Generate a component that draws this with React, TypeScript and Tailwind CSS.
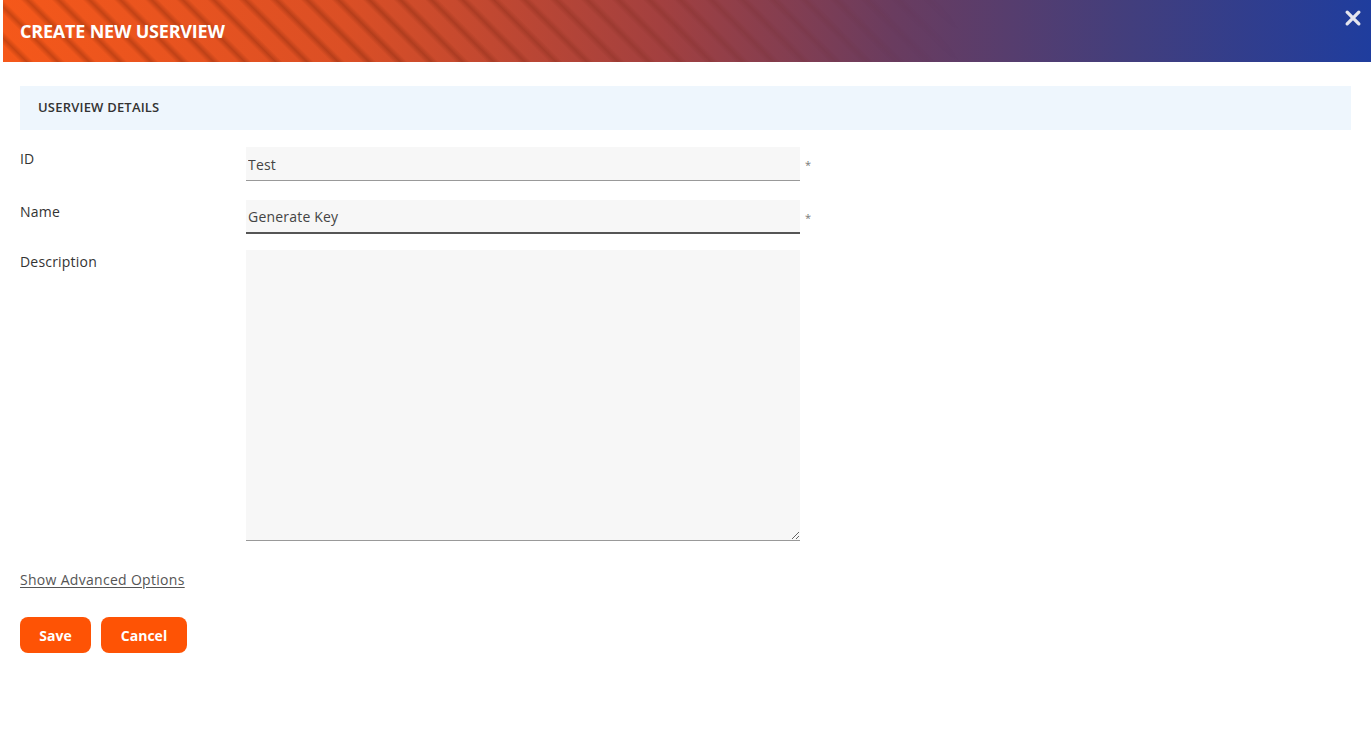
import { useState } from 'react';

const FONT = "font-['Open_Sans','Liberation_Sans',sans-serif]";

export default function App() {
  const [id, setId] = useState('Test');
  const [name, setName] = useState('Generate Key');
  const [description, setDescription] = useState('');

  return (
    <div className={`${FONT} bg-white min-h-[732px] w-full text-[#333]`}>
      {/* Header */}
      <div className="relative ml-[3px] h-[62px] overflow-hidden bg-[linear-gradient(90deg,#f5581a_0%,#db4f25_25%,#a3403f_48%,#6a3c5f_65%,#433e7c_82%,#1f3d9e_100%)]">
        <div className="absolute inset-y-0 left-0 w-[70%] bg-[repeating-linear-gradient(45deg,rgba(0,0,0,0)_0px,rgba(0,0,0,0)_12px,rgba(90,20,0,0.28)_17px,rgba(0,0,0,0)_22px)] [mask-image:linear-gradient(to_right,black_0%,black_40%,transparent_100%)]" />
        <div className="relative flex h-full items-center justify-between pl-[17px] pr-[8px]">
          <h1 className="text-[18px] font-bold tracking-[-0.2px] text-white">
            CREATE NEW USERVIEW
          </h1>
          <button className="self-start mt-[8px] text-[#e5e5ee]">
            <svg viewBox="0 0 24 24" className="h-[20px] w-[20px]" fill="none" stroke="currentColor" strokeWidth={4} strokeLinecap="round">
              <path d="M5 5l14 14M19 5L5 19" />
            </svg>
          </button>
        </div>
      </div>

      <div className="px-5">
        {/* Section header */}
        <div className="mt-6 flex h-[44px] items-center bg-[#eef6fd] px-[18px]">
          <h2 className="text-[13px] font-semibold tracking-[0.2px] text-[#333]">USERVIEW DETAILS</h2>
        </div>

        {/* Form */}
        <div className="mt-[17px] flex flex-col text-[14px] tracking-[0.2px]">
          <div className="flex">
            <label className="w-[226px] pt-[1px] font-medium text-[#333]">ID</label>
            <input
              value={id}
              onChange={(e) => setId(e.target.value)}
              className="h-[34px] w-[554px] border-b border-[#999] bg-[#f7f7f7] px-[2px] pt-[1px] text-[#444] outline-none"
            />
            <span className="ml-[5px] mt-[10px] text-[11px] text-[#777]">*</span>
          </div>

          <div className="mt-[19px] flex">
            <label className="w-[226px] pt-[1px] font-medium text-[#333]">Name</label>
            <input
              value={name}
              onChange={(e) => setName(e.target.value)}
              className="h-[34px] w-[554px] border-b-2 border-[#555] bg-[#f7f7f7] px-[2px] pt-[1px] text-[#444] outline-none"
            />
            <span className="ml-[5px] mt-[10px] text-[11px] text-[#777]">*</span>
          </div>

          <div className="mt-[16px] flex">
            <label className="w-[226px] pt-[1px] font-medium text-[#333]">Description</label>
            <textarea
              value={description}
              onChange={(e) => setDescription(e.target.value)}
              className="h-[291px] w-[554px] border-b border-[#999] bg-[#f7f7f7] px-[2px] text-[#444] outline-none"
            />
          </div>
        </div>

        <a href="#" className="mt-[28px] inline-block text-[14px] tracking-[0.3px] text-[#555] underline underline-offset-2">
          Show Advanced Options
        </a>

        <div className="mt-[26px] flex gap-[10px]">
          <button className="h-[36px] w-[71px] rounded-[8px] bg-[#fe5305] text-[14px] font-bold text-white">Save</button>
          <button className="h-[36px] w-[86px] rounded-[8px] bg-[#fe5305] text-[14px] font-bold text-white">Cancel</button>
        </div>
      </div>
    </div>
  );
}
